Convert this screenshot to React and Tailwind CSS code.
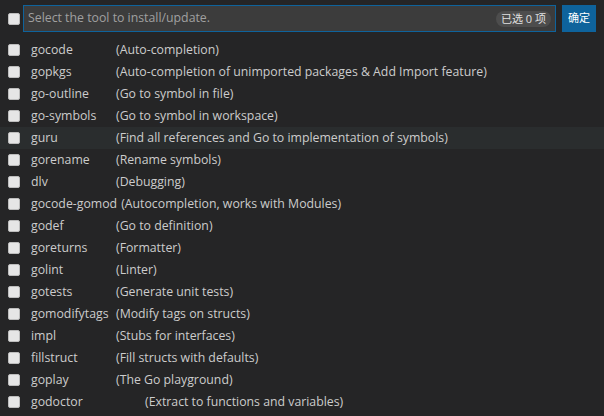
import React from 'react';

const tools = [
  ['gocode', '(Auto-completion)'],
  ['gopkgs', '(Auto-completion of unimported packages & Add Import feature)'],
  ['go-outline', '(Go to symbol in file)'],
  ['go-symbols', '(Go to symbol in workspace)'],
  ['guru', '(Find all references and Go to implementation of symbols)'],
  ['gorename', '(Rename symbols)'],
  ['dlv', '(Debugging)'],
  ['gocode-gomod', '(Autocompletion, works with Modules)'],
  ['godef', '(Go to definition)'],
  ['goreturns', '(Formatter)'],
  ['golint', '(Linter)'],
  ['gotests', '(Generate unit tests)'],
  ['gomodifytags', '(Modify tags on structs)'],
  ['impl', '(Stubs for interfaces)'],
  ['fillstruct', '(Fill structs with defaults)'],
  ['goplay', '(The Go playground)'],
  ['godoctor', '(Extract to functions and variables)'],
];

const Box = () => (
  <div className="w-[12px] h-[12px] shrink-0 rounded-[2px] bg-[#e6e6e6] border border-[#bdbdbd]"></div>
);

export default function App() {
  return (
    <div
      className="w-[604px] h-[416px] bg-[#252526] text-[#cccccc] text-[12.3px] overflow-hidden"
      style={{ fontFamily: '"Open Sans", "Noto Sans CJK SC", sans-serif' }}
    >
      <div className="flex items-center h-[39px] pl-[8px] pr-[8px] pt-[5px] pb-[7px]">
        <Box />
        <div className="ml-[3px] flex-1 h-[27px] flex items-center justify-between bg-[#3c3c3c] border border-[#0e639c] pl-[4px] pr-[4px]">
          <span className="text-[#a0a0a0]">Select the tool to install/update.</span>
          <span className="rounded-full bg-[#4d4d4d] text-[#e0e0e0] text-[11px] px-[5px] leading-[16px]">已选 0 项</span>
        </div>
        <div className="ml-[6px] w-[34px] h-[27px] bg-[#0e639c] text-white text-[11px] flex items-center justify-center">
          确定
        </div>
      </div>
      {tools.map(([name, desc], i) => (
        <div
          key={name}
          className={`flex items-center h-[22px] pl-[8px] ${i === 4 ? 'bg-[#2a2d2e]' : ''}`}
        >
          <Box />
          <span className={`ml-[11px] shrink-0 whitespace-nowrap ${name === 'godoctor' ? 'w-[114px]' : 'min-w-[81px] mr-[4px]'}`}>
            {name}
          </span>
          <span className="whitespace-nowrap">{desc}</span>
        </div>
      ))}
    </div>
  );
}
